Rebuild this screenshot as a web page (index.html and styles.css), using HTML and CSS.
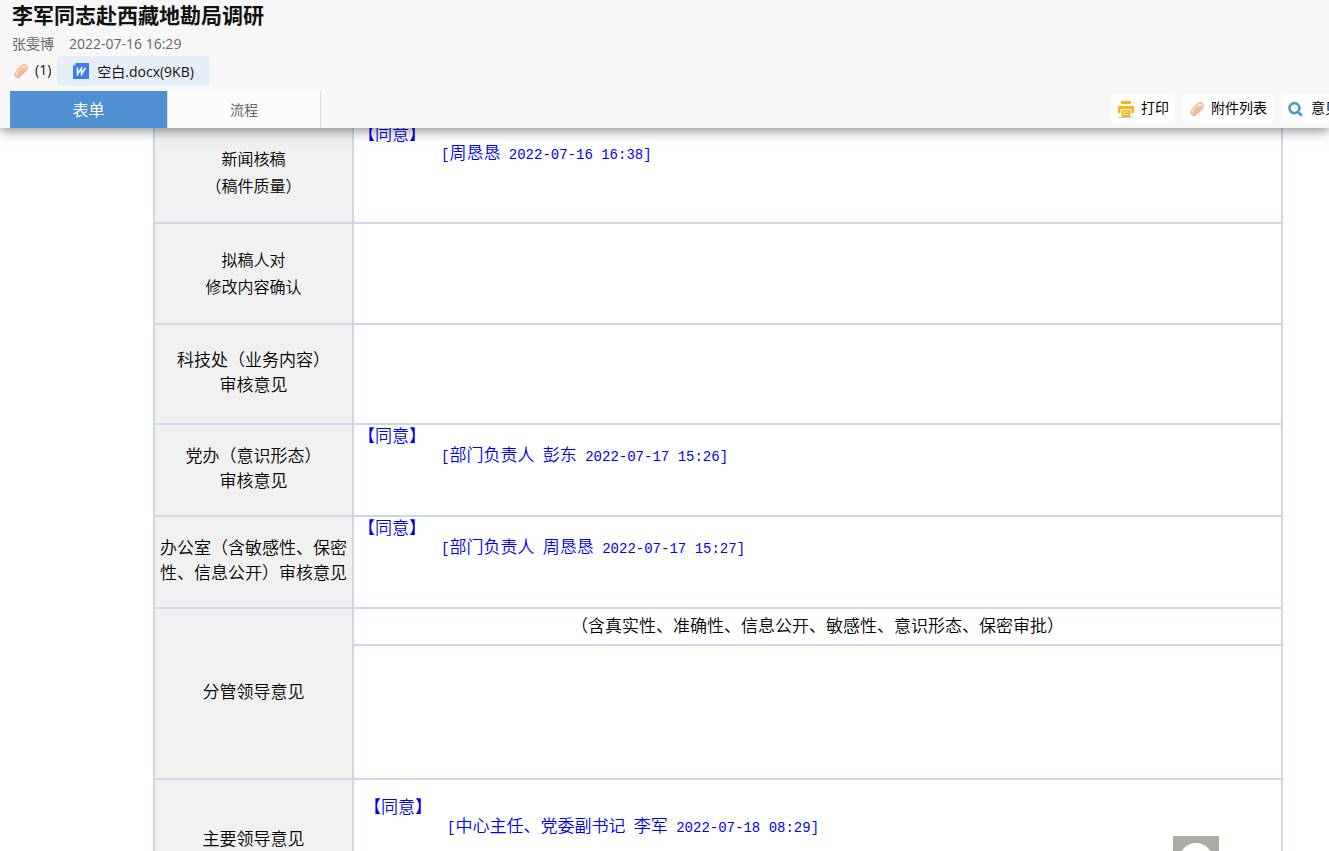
FILE: index.html
```
<!DOCTYPE html>
<html lang="zh-CN">
  <head>
    <meta charset="utf-8" />
    <title>李军同志赴西藏地勘局调研</title>
    <link rel="stylesheet" href="styles.css">
  </head>
  <body>
    <header class="header">
      <h1>李军同志赴西藏地勘局调研</h1>
      <div class="meta">
        <span>张雯博</span>
        <span class="meta-date">2022-07-16 16:29</span>
      </div>
      <div class="attachments">
        <svg class="clip-icon" viewBox="0 0 16 16">
          <path d="M3 9 L8.5 3 Q11 .8 13.2 2.8 Q15.2 4.8 13.2 7.2 L7.2 13.4 Q5 15.4 3 13.6 Q1 11.6 2.8 9.6 M5 11.2 L10.4 5.2 Q11.4 4.4 12 5.2 Q12.4 5.8 11.6 6.8 L6 12.4 Q4.8 13.2 4.2 12.4 Q3.6 11.6 4.6 10.6 L9.4 5.4" />
        </svg>
        <span class="count">(1)</span>
        <a class="file" href="#">
          <svg class="word-icon" viewBox="0 0 16 16">
            <path fill="#3d7eee" d="M3 0H16V16H0V3Z" />
            <path fill="#8fb5f8" d="M3 0V3H0Z" />
            <path fill="none" stroke="#fff" stroke-width="1.6" d="M4.4 4.6L4.6 11L8.4 5.4L8.6 11L12.6 4.6" />
          </svg>
          <span>空白.docx(9KB)</span>
        </a>
      </div>
      <div class="bar">
        <nav class="tabs">
          <button type="button" class="tab active">表单</button>
          <button type="button" class="tab">流程</button>
        </nav>
        <div class="toolbar">
          <button type="button" class="tool">
            <svg class="print-icon" viewBox="0 0 18 18">
              <path fill="#fbb215" d="M4 1H14V4H4ZM1 6H17V13H14.5V9H3.5V13H1Z" />
              <path fill="#fbb215" fill-rule="evenodd" d="M4.5 10H13.5V17H4.5ZM6.5 11.5V12.5H11.5V11.5ZM6.5 14V15H11.5V14Z" />
              <path fill="#b9d6e4" d="M2 17H16V18H2Z" />
            </svg>
            <span>打印</span>
          </button>
          <button type="button" class="tool">
            <svg class="clip-icon" viewBox="0 0 16 16">
              <path d="M3 9 L8.5 3 Q11 .8 13.2 2.8 Q15.2 4.8 13.2 7.2 L7.2 13.4 Q5 15.4 3 13.6 Q1 11.6 2.8 9.6 M5 11.2 L10.4 5.2 Q11.4 4.4 12 5.2 Q12.4 5.8 11.6 6.8 L6 12.4 Q4.8 13.2 4.2 12.4 Q3.6 11.6 4.6 10.6 L9.4 5.4" />
            </svg>
            <span>附件列表</span>
          </button>
          <button type="button" class="tool">
            <svg class="search-icon" viewBox="0 0 16 16">
              <circle cx="6.6" cy="7.2" r="4.4" />
              <path d="M10 10.8L13.2 14" />
            </svg>
            <span>意见</span>
          </button>
        </div>
      </div>
    </header>

    <main class="content">
      <table class="form-table">
        <tr class="row-high">
          <th class="label small">新闻核稿<br>（稿件质量）</th>
          <td>
            <div class="opinion">【同意】</div>
            <div class="sign">[<span>周恳恳</span> 2022-07-16 16:38]</div>
          </td>
        </tr>
        <tr class="row-high">
          <th class="label small">拟稿人对<br>修改内容确认</th>
          <td></td>
        </tr>
        <tr class="row-tech">
          <th class="label">科技处（业务内容）<br>审核意见</th>
          <td></td>
        </tr>
        <tr class="row-mid">
          <th class="label">党办（意识形态）<br>审核意见</th>
          <td>
            <div class="opinion">【同意】</div>
            <div class="sign">[<span>部门负责人</span> <span>彭东</span> 2022-07-17 15:26]</div>
          </td>
        </tr>
        <tr class="row-mid">
          <th class="label">办公室（含敏感性、保密性、信息公开）审核意见</th>
          <td>
            <div class="opinion">【同意】</div>
            <div class="sign">[<span>部门负责人</span> <span>周恳恳</span> 2022-07-17 15:27]</div>
          </td>
        </tr>
        <tr class="row-note">
          <th class="label" rowspan="2">分管领导意见</th>
          <td class="note">（含真实性、准确性、信息公开、敏感性、意识形态、保密审批）</td>
        </tr>
        <tr class="row-blank">
          <td></td>
        </tr>
        <tr class="row-last">
          <th class="label">主要领导意见</th>
          <td class="indented">
            <div class="opinion">【同意】</div>
            <div class="sign">[<span>中心主任、党委副书记</span> <span>李军</span> 2022-07-18 08:29]</div>
          </td>
        </tr>
      </table>
    </main>

    <button type="button" class="to-top" aria-label="返回顶部">
      <svg viewBox="0 0 46 46">
        <circle cx="23" cy="24" r="17" fill="#fff" />
        <path fill="none" stroke="#adaaa2" stroke-width="3" d="M15 25L23 17L31 25M23 18V36" />
      </svg>
    </button>
  </body>
</html>
```
FILE: styles.css
```
body {
  font-family: "Open Sans", "Noto Sans CJK SC", sans-serif;
  font-size: 14px;
  background-color: #fff;
  color: #111;
  margin: 0;
  height: 100vh;
  display: flex;
  flex-direction: column;
  overflow: hidden;
}

button {
  font-family: inherit;
  border: none;
  padding: 0;
  cursor: pointer;
}

.header {
  position: relative;
  z-index: 1;
  background-color: #f7f7f7;
  box-shadow: 0 2px 12px rgba(0, 0, 0, 0.5);
}

h1 {
  margin: 0;
  padding: 0 12px 2px;
  font-size: 21px;
  line-height: 30px;
}

.meta {
  display: flex;
  gap: 15px;
  padding: 0 12px;
  line-height: 24px;
  color: #666;
}

.attachments {
  display: flex;
  align-items: center;
  padding: 0 13px;
  height: 30px;
}

.clip-icon {
  width: 16px;
  height: 16px;
  fill: none;
  stroke: #f3ae86;
  stroke-width: 1.3;
}

.count {
  margin: 0 6px;
  padding-bottom: 4px;
}

.file {
  display: flex;
  align-items: center;
  gap: 8px;
  height: 30px;
  padding: 0 16px;
  border-radius: 4px;
  background-color: #e6eef8;
  color: #111;
  text-decoration: none;
}

.word-icon {
  width: 16px;
  height: 16px;
}

.bar {
  display: flex;
  justify-content: space-between;
  margin-top: 5px;
  padding-left: 10px;
}

.tabs {
  display: flex;
}

.tab {
  width: 153px;
  height: 37px;
  padding-bottom: 2px;
  border-right: 1px solid #ddd;
  background-color: #fcfcfc;
  color: #666;
  font-size: 14px;
}

.tab.active {
  width: 158px;
  background-color: #5090d2;
  color: #fff;
  font-size: 16px;
}

/* the last button runs off the right edge */
.toolbar {
  display: flex;
  gap: 8px;
  width: 218px;
  padding-top: 3px;
  overflow: hidden;
}

.tool {
  display: flex;
  flex: none;
  align-items: center;
  gap: 6px;
  height: 29px;
  padding: 0 6px;
  border-radius: 4px;
  background-color: #fff;
  color: #000;
  font-size: 14px;
}

.tool span {
  padding-bottom: 3px;
}

.print-icon {
  width: 18px;
  height: 18px;
}

.search-icon {
  width: 18px;
  height: 18px;
  fill: none;
  stroke: #4a9cc4;
  stroke-width: 2.4;
}

.content {
  flex: 1;
  min-height: 0;
  overflow: hidden;
  padding: 0 46px 0 153px;
}

.form-table {
  width: 100%;
  margin-top: -7px;
  border-collapse: collapse;
  table-layout: fixed;
  font-size: 17px;
  line-height: 25px;
  color: #000;
}

.form-table th,
.form-table td {
  border: 2px solid #ccd7ea;
  padding: 0 4px;
  font-weight: 350;
}

.form-table td {
  vertical-align: top;
}

.form-table .label {
  width: 189px;
  padding-bottom: 4px;
  background-color: #f1f1f1;
  text-align: center;
  vertical-align: middle;
}

.form-table .small {
  padding-bottom: 0;
  font-size: 16px;
  line-height: 27px;
}

.row-high {
  height: 101px;
}

.row-tech {
  height: 100px;
}

.row-mid {
  height: 92px;
}

.row-note {
  height: 37px;
}

.row-blank {
  height: 134px;
}

.row-last {
  height: 122px;
}

.form-table .note {
  padding-bottom: 3px;
  text-align: center;
  vertical-align: middle;
}

.form-table .indented {
  padding: 16px 10px;
}

.opinion,
.sign {
  line-height: 21px;
  color: #0000f0;
}

.sign {
  padding-left: 83px;
  font-family: "Liberation Mono", "Noto Sans CJK SC", monospace;
  font-size: 14px;
}

.sign span {
  font-size: 17px;
}

.to-top {
  position: fixed;
  right: 110px;
  bottom: -31px;
  width: 46px;
  height: 46px;
  background-color: #adaaa2;
}
```
